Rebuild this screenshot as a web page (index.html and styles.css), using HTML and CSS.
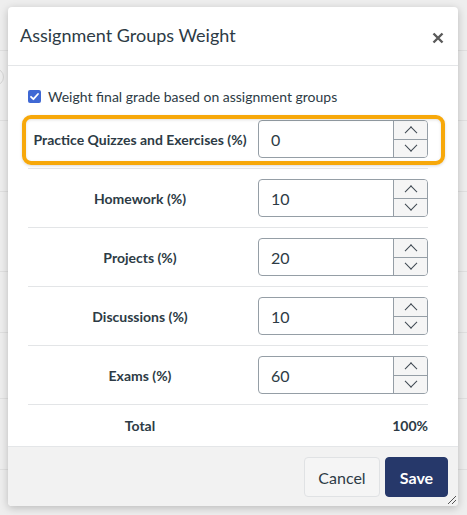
FILE: index.html
```html
<!DOCTYPE html>
<html lang="en">
<head>
<meta charset="utf-8">
<title>Assignment Groups Weight</title>
<link rel="stylesheet" href="styles.css">
</head>
<body>
<div class="backdrop">
  <div class="bg-row r1"></div>
  <div class="bg-row r2"><span class="bg-circle"></span></div>
  <div class="bg-row r3"></div>
  <div class="bg-row r4"></div>
  <div class="bg-row r5"></div>
  <div class="bg-row r6"></div>
  <div class="bg-row r7"></div>
</div>

<div class="dialog" role="dialog" aria-label="Assignment Groups Weight">
  <header class="dlg-header">
    <h2 class="dlg-title">Assignment Groups Weight</h2>
    <button class="close" aria-label="Close">
      <svg width="12" height="12" viewBox="0 0 12 12"><path d="M1.5 1.5 L10.5 10.5 M10.5 1.5 L1.5 10.5" stroke="#5a5a5a" stroke-width="2.4" stroke-linecap="butt"/></svg>
    </button>
  </header>

  <div class="dlg-body">
    <label class="check-row">
      <span class="checkbox"><svg width="13" height="13" viewBox="0 0 13 13"><path d="M3 6.8 L5.4 9.2 L10 4" fill="none" stroke="#fff" stroke-width="1.8" stroke-linecap="round" stroke-linejoin="round"/></svg></span>
      <span>Weight final grade based on assignment groups</span>
    </label>

    <div class="rows">
      <div class="row focused">
        <span class="lbl">Practice Quizzes and Exercises (%)</span>
        <div class="num"><span class="val">0</span><span class="spin"><span class="up"></span><span class="down"></span></span></div>
      </div>
      <div class="row">
        <span class="lbl">Homework (%)</span>
        <div class="num"><span class="val">10</span><span class="spin"><span class="up"></span><span class="down"></span></span></div>
      </div>
      <div class="row">
        <span class="lbl">Projects (%)</span>
        <div class="num"><span class="val">20</span><span class="spin"><span class="up"></span><span class="down"></span></span></div>
      </div>
      <div class="row">
        <span class="lbl">Discussions (%)</span>
        <div class="num"><span class="val">10</span><span class="spin"><span class="up"></span><span class="down"></span></span></div>
      </div>
      <div class="row">
        <span class="lbl">Exams (%)</span>
        <div class="num"><span class="val">60</span><span class="spin"><span class="up"></span><span class="down"></span></span></div>
      </div>
      <div class="row total">
        <span class="lbl">Total</span>
        <span class="total-val">100%</span>
      </div>
    </div>
  </div>

  <footer class="dlg-footer">
    <button class="btn cancel">Cancel</button>
    <button class="btn save">Save</button>
    <span class="grip">
      <svg width="12" height="12" viewBox="0 0 12 12"><path d="M11 3 L3 11 M11 7 L7 11" stroke="#555" stroke-width="1"/></svg>
    </span>
  </footer>
</div>
</body>
</html>
```

FILE: styles.css
```css
html, body {
  margin: 0;
  padding: 0;
}
body {
  width: 467px;
  height: 515px;
  overflow: hidden;
  background: #eeeeee;
  font-family: Lato, "Open Sans", "Liberation Sans", sans-serif;
  color: #2d3b45;
  position: relative;
}

/* page behind the modal */
.backdrop {
  display: flex;
  flex-direction: column;
}
.bg-row {
  border-bottom: 1px solid #e0e0e0;
  position: relative;
}
.r1 { height: 50px; }
.r2 { height: 69px; }
.r3 { height: 70px; }
.r4 { height: 79px; }
.r5 { height: 60px; }
.r6 { height: 65px; }
.r7 { height: 70px; }
.bg-circle {
  position: absolute;
  left: -14px;
  top: 17px;
  width: 16px;
  height: 16px;
  border: 1px solid #d6d6d6;
  border-radius: 50%;
}

/* dialog */
.dialog {
  position: absolute;
  left: 8px;
  top: 7px;
  width: 450px;
  height: 499px;
  background: #fff;
  border-radius: 4px;
  box-shadow: 0 2px 8px rgba(0,0,0,0.22);
  display: flex;
  flex-direction: column;
}
.dlg-header {
  height: 58px;
  border-bottom: 1px solid #e4e6e8;
  display: flex;
  align-items: center;
  justify-content: space-between;
  padding: 0 14px 0 12px;
}
.dlg-title {
  margin: 0;
  font-size: 18px;
  font-weight: 400;
  line-height: 24px;
  margin-top: -2px;
  color: #2d3b45;
}
.close {
  border: 0;
  background: none;
  padding: 0;
  width: 12px;
  height: 12px;
  display: block;
  margin-top: 3px;
}
.close svg { display: block; }

.dlg-body {
  flex: 1;
  padding: 0 30px 0 20px;
}
.check-row {
  display: flex;
  align-items: center;
  gap: 7px;
  height: 20px;
  margin-top: 20px;
  font-size: 14px;
  color: #2d3b45;
}
.checkbox {
  width: 13px;
  height: 13px;
  border-radius: 2px;
  background: #3f68d4;
  display: block;
  flex: none;
}
.checkbox svg { display: block; }

.rows {
  margin-top: 4px;
}
.row {
  display: grid;
  grid-template-columns: 1fr 170px;
  column-gap: 6px;
  align-items: center;
  padding: 10px 0;
  border-bottom: 1px solid #e3e5e7;
  position: relative;
}
.row.focused::before {
  content: "";
  position: absolute;
  left: -6px;
  right: -17px;
  top: 5px;
  bottom: 3px;
  border: 4px solid #f7a80a;
  border-radius: 9px;
  box-shadow: 0 1px 3px rgba(0,0,0,0.15), inset 0 1px 3px rgba(0,0,0,0.12);
  pointer-events: none;
}
.lbl {
  text-align: center;
  font-weight: 700;
  font-size: 14px;
  color: #2d3b45;
}
.num {
  height: 38px;
  border: 1px solid #959ea6;
  border-radius: 4px;
  display: flex;
  box-sizing: border-box;
  background: #fff;
  overflow: hidden;
}
.val {
  flex: 1;
  font-size: 16px;
  padding-left: 12px;
  display: flex;
  align-items: center;
  color: #2d3b45;
}
.spin {
  width: 33px;
  border-left: 1px solid #959ea6;
  background: #f5f5f5;
  display: flex;
  flex-direction: column;
}
.spin span {
  flex: 1;
  position: relative;
}
.spin .up { border-bottom: 1px solid #959ea6; }
.spin span::after {
  content: "";
  position: absolute;
  left: 50%;
  top: 50%;
  width: 8px;
  height: 8px;
  border-left: 1.2px solid #3d4750;
  border-top: 1.2px solid #3d4750;
}
.spin .up::after { transform: translate(-50%, -20%) rotate(45deg); }
.spin .down::after { transform: translate(-50%, -80%) rotate(225deg); }

.row.total {
  border-bottom: 0;
  padding: 10px 0 9px;
  height: 20px;
}
.total-val {
  text-align: right;
  font-weight: 700;
  font-size: 14px;
}

.dlg-footer {
  height: 59px;
  border-top: 1px solid #e4e6e8;
  background: #f2f2f2;
  border-radius: 0 0 4px 4px;
  display: flex;
  align-items: center;
  justify-content: flex-end;
  gap: 5px;
  padding-right: 10px;
  position: relative;
}
.btn {
  height: 40px;
  border-radius: 4px;
  font-family: Lato, "Open Sans", "Liberation Sans", sans-serif;
  font-size: 16px;
  padding: 0;
  margin-top: 1px;
}
.cancel {
  width: 76px;
  background: #f5f5f5;
  border: 1px solid #e0e2e4;
  color: #2d3b45;
}
.save {
  width: 63px;
  background: #26386a;
  border: 1px solid #26386a;
  color: #fff;
  font-weight: 700;
}
.grip {
  position: absolute;
  right: 1px;
  bottom: 1px;
  width: 12px;
  height: 12px;
}
.grip svg { display: block; }
```
